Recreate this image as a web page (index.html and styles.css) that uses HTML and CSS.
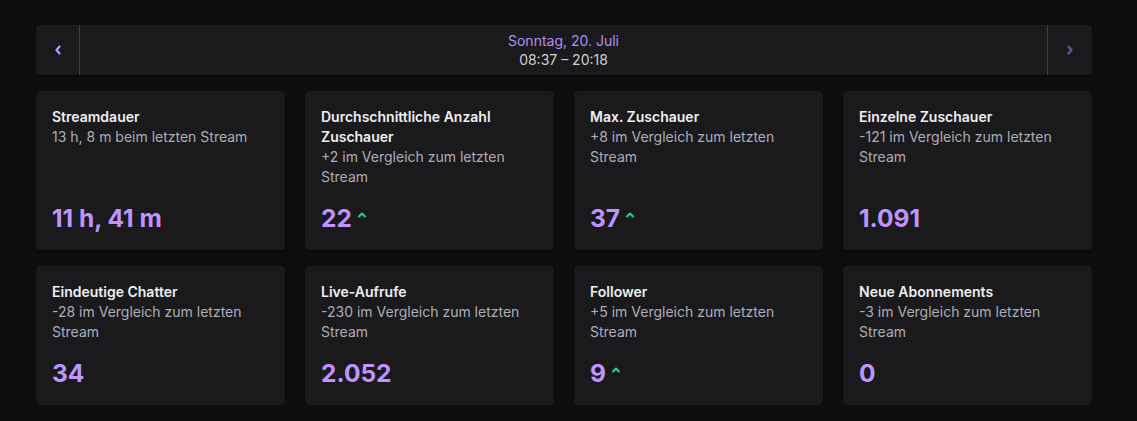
FILE: index.html
```html
<!DOCTYPE html>
<html lang="de">
<head>
<meta charset="utf-8">
<title>Stream-Zusammenfassung</title>
<link rel="stylesheet" href="styles.css">
</head>
<body>
<main class="page">
  <div class="datebar">
    <button class="nav nav-prev" aria-label="Zurück">
      <svg width="8" height="10" viewBox="0 0 8 10"><path d="M5.5 1.5 L2.5 5 L5.5 8.5" fill="none" stroke="currentColor" stroke-width="2.2" stroke-linecap="round" stroke-linejoin="round"/></svg>
    </button>
    <div class="date">
      <div class="date-day">Sonntag, 20. Juli</div>
      <div class="date-time">08:37 – 20:18</div>
    </div>
    <button class="nav nav-next" aria-label="Weiter">
      <svg width="8" height="10" viewBox="0 0 8 10"><path d="M2.5 1.5 L5.5 5 L2.5 8.5" fill="none" stroke="currentColor" stroke-width="2.2" stroke-linecap="round" stroke-linejoin="round"/></svg>
    </button>
  </div>

  <div class="grid">
    <div class="card">
      <div class="card-title">Streamdauer</div>
      <div class="card-sub">13 h, 8 m beim letzten Stream</div>
      <div class="card-value">11 h, 41 m</div>
    </div>
    <div class="card">
      <div class="card-title">Durchschnittliche Anzahl Zuschauer</div>
      <div class="card-sub">+2 im Vergleich zum letzten Stream</div>
      <div class="card-value">22 <svg class="up" width="10" height="8" viewBox="0 0 10 8"><path d="M2 5.5 L5 2.5 L8 5.5" fill="none" stroke="currentColor" stroke-width="2" stroke-linecap="round" stroke-linejoin="round"/></svg></div>
    </div>
    <div class="card">
      <div class="card-title">Max. Zuschauer</div>
      <div class="card-sub">+8 im Vergleich zum letzten Stream</div>
      <div class="card-value">37 <svg class="up" width="10" height="8" viewBox="0 0 10 8"><path d="M2 5.5 L5 2.5 L8 5.5" fill="none" stroke="currentColor" stroke-width="2" stroke-linecap="round" stroke-linejoin="round"/></svg></div>
    </div>
    <div class="card">
      <div class="card-title">Einzelne Zuschauer</div>
      <div class="card-sub">-121 im Vergleich zum letzten Stream</div>
      <div class="card-value">1.091</div>
    </div>
    <div class="card">
      <div class="card-title">Eindeutige Chatter</div>
      <div class="card-sub">-28 im Vergleich zum letzten Stream</div>
      <div class="card-value">34</div>
    </div>
    <div class="card">
      <div class="card-title">Live-Aufrufe</div>
      <div class="card-sub">-230 im Vergleich zum letzten Stream</div>
      <div class="card-value">2.052</div>
    </div>
    <div class="card">
      <div class="card-title">Follower</div>
      <div class="card-sub">+5 im Vergleich zum letzten Stream</div>
      <div class="card-value">9 <svg class="up" width="10" height="8" viewBox="0 0 10 8"><path d="M2 5.5 L5 2.5 L8 5.5" fill="none" stroke="currentColor" stroke-width="2" stroke-linecap="round" stroke-linejoin="round"/></svg></div>
    </div>
    <div class="card">
      <div class="card-title">Neue Abonnements</div>
      <div class="card-sub">-3 im Vergleich zum letzten Stream</div>
      <div class="card-value">0</div>
    </div>
  </div>
</main>
</body>
</html>
```
FILE: styles.css
```css
* { box-sizing: border-box; }

html, body {
  margin: 0;
  background: #0e0e10;
}

body {
  font-family: Inter, "Noto Sans", sans-serif;
  font-size: 14px;
  line-height: 20px;
  color: #efeff1;
}

.page {
  padding: 25px 45px 0 36px;
}

.datebar {
  display: flex;
  height: 50px;
  background: #1a1a1d;
  border-radius: 2px;
  box-shadow: 0 1px 2px rgba(0, 0, 0, 0.6);
}

.nav {
  width: 44px;
  flex: none;
  display: flex;
  align-items: center;
  justify-content: center;
  background: transparent;
  border: 0;
  padding: 0;
  color: #bf94ff;
}

.nav-prev {
  border-right: 1px solid #3d3d42;
}

.nav-next {
  width: 45px;
  border-left: 1px solid #3d3d42;
  color: #6b55a3;
}

.date {
  flex: 1;
  display: flex;
  flex-direction: column;
  justify-content: center;
  align-items: center;
  line-height: 19px;
}

.date-day {
  color: #b08cf6;
}

.date-time {
  color: #cfcfd4;
}

.grid {
  margin-top: 16px;
  display: grid;
  grid-template-columns: repeat(4, 1fr);
  column-gap: 20px;
  row-gap: 16px;
}

.card {
  background: #1a1a1d;
  border-radius: 4px;
  padding: 16px 16px 17px;
  display: flex;
  flex-direction: column;
  box-shadow: 0 1px 2px rgba(0, 0, 0, 0.5);
}

.card-title {
  font-weight: 600;
  color: #efeff1;
}

.card-sub {
  color: #adadb8;
}

.card-value {
  margin-top: auto;
  padding-top: 16px;
  font-size: 24.5px;
  line-height: 30px;
  font-weight: 700;
  color: #bf94ff;
  display: flex;
  align-items: center;
}

.up {
  color: #1ed694;
  margin-left: 5px;
  margin-top: -6px;
}
```
